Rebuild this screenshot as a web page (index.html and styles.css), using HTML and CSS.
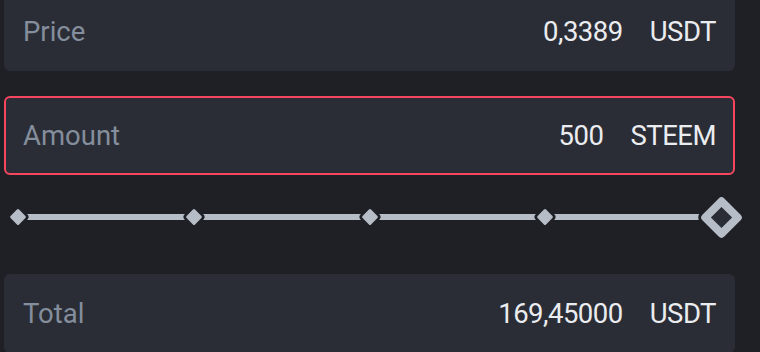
FILE: index.html
```html
<!DOCTYPE html>
<html>
<head>
<meta charset="utf-8">
<link rel="stylesheet" href="styles.css">
</head>
<body>
<div class="form">
  <div class="field">
    <span class="label">Price</span>
    <span class="value">0,3389</span>
    <span class="unit">USDT</span>
  </div>
  <div class="field field--error">
    <span class="label">Amount</span>
    <span class="value">500</span>
    <span class="unit">STEEM</span>
  </div>
  <div class="slider">
    <div class="track"></div>
    <span class="mark"><i class="dot"></i></span>
    <span class="mark"><i class="dot"></i></span>
    <span class="mark"><i class="dot"></i></span>
    <span class="mark"><i class="dot"></i></span>
    <span class="mark"><i class="thumb"></i></span>
  </div>
  <div class="field">
    <span class="label">Total</span>
    <span class="value">169,45000</span>
    <span class="unit">USDT</span>
  </div>
</div>
</body>
</html>
```
FILE: styles.css
```css
html, body {
  margin: 0;
  padding: 0;
  background: #1e2026;
  width: 760px;
  height: 352px;
  overflow: hidden;
}
.form {
  width: 731px;
  margin: -8px 0 0 4px;
  display: flex;
  flex-direction: column;
  gap: 25px;
  font-family: Roboto, "Liberation Sans", sans-serif;
}
.field {
  box-sizing: border-box;
  height: 79px;
  display: flex;
  align-items: center;
  padding: 0 17px 0 17px;
  background: #2a2d35;
  border: 2px solid #2a2d35;
  border-radius: 6px;
}
.field--error {
  border-color: #f6465d;
}
.label {
  font-size: 27.5px;
  color: #848e9c;
}
.value, .unit {
  font-size: 27.5px;
  letter-spacing: -0.5px;
  color: #eaecef;
}
.value {
  margin-left: auto;
}
.unit {
  margin-left: 27px;
}
.slider {
  position: relative;
  height: 44px;
  margin: -5px -2px 10px -2px;
  display: flex;
  justify-content: space-between;
  align-items: center;
}
.track {
  position: absolute;
  left: 16px;
  right: 32px;
  top: 50%;
  height: 6px;
  margin-top: -3px;
  background: #b7bdc6;
}
.mark {
  position: relative;
  width: 32px;
  height: 32px;
  display: flex;
  align-items: center;
  justify-content: center;
}
.dot {
  width: 12px;
  height: 12px;
  background: #b7bdc6;
  border-radius: 1.5px;
  transform: rotate(45deg);
  box-shadow: 0 0 0 2.5px #1e2026;
}
.thumb {
  box-sizing: border-box;
  flex: none;
  width: 31px;
  height: 31px;
  background: #2a2d35;
  border: 8px solid #b7bdc6;
  border-radius: 4px;
  transform: rotate(45deg);
  box-shadow: 0 0 0 3px #1e2026;
}
```
